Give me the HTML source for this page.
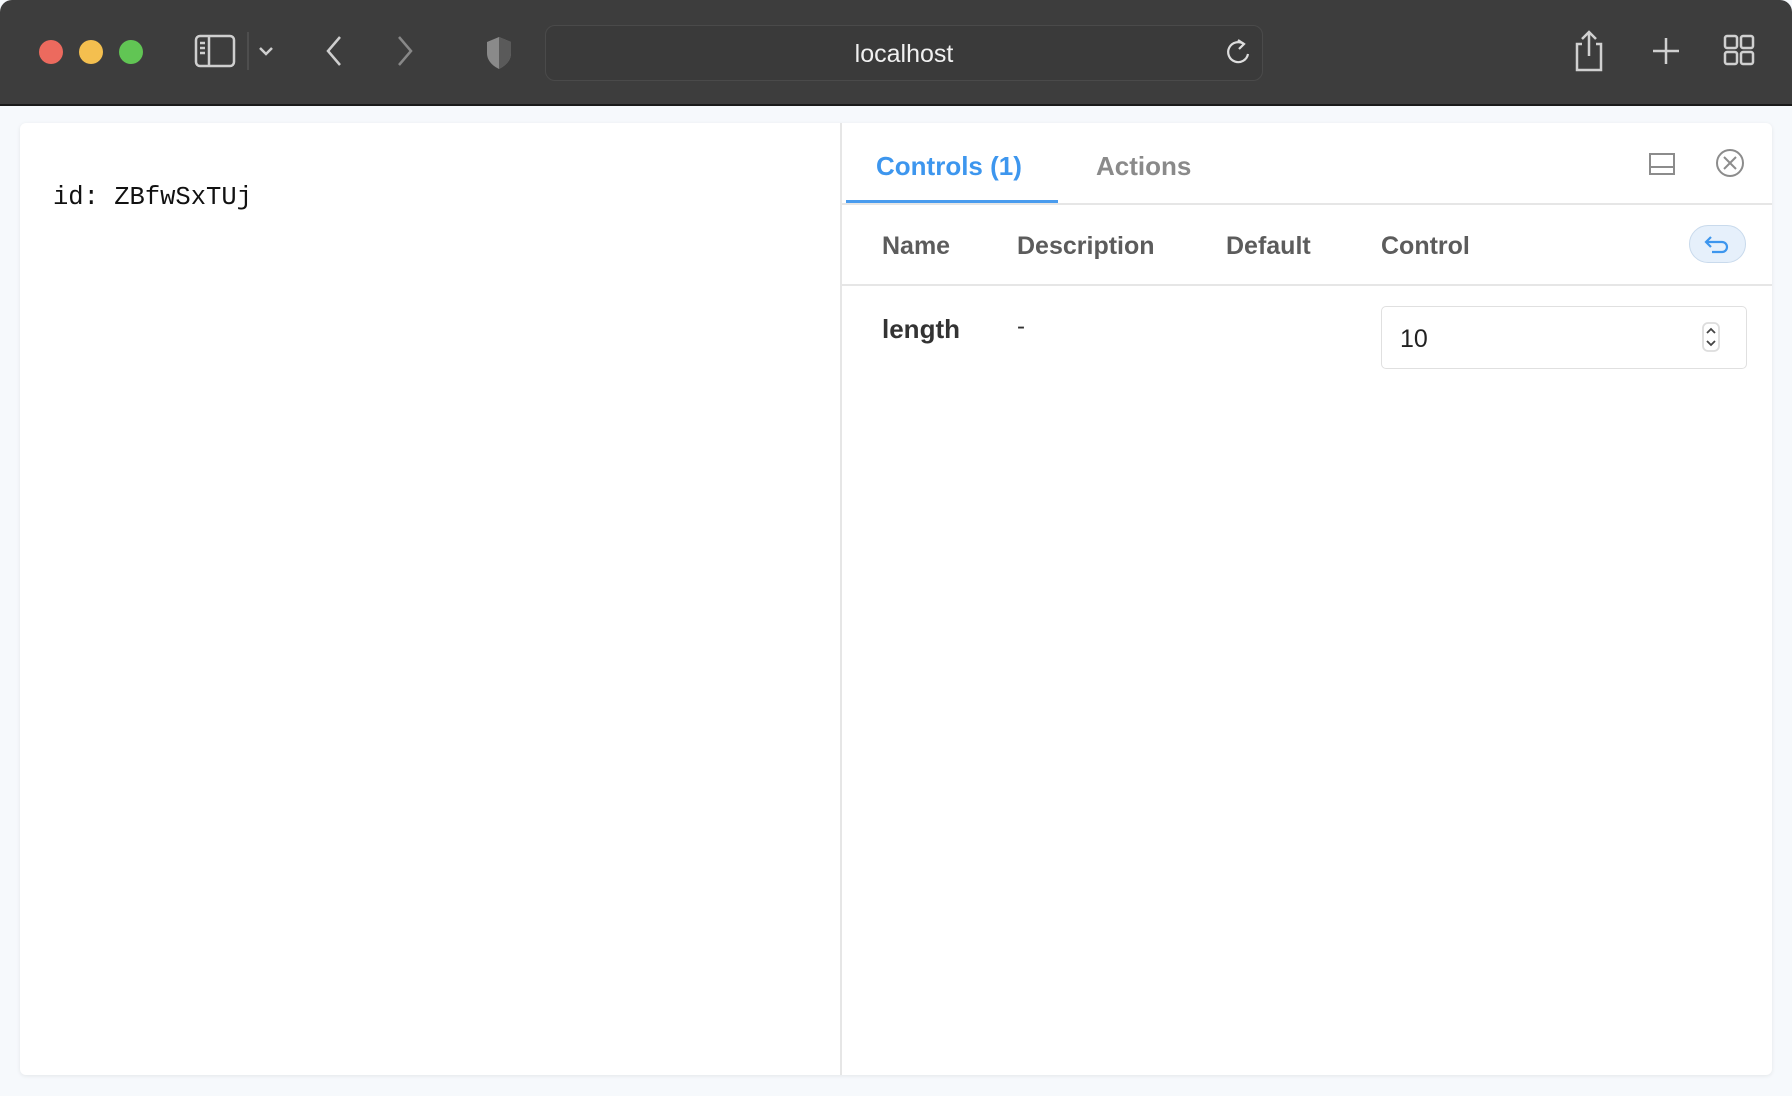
<!DOCTYPE html>
<html><head><meta charset="utf-8"><style>
*{box-sizing:border-box;margin:0;padding:0}
body{width:1792px;height:1096px;background:#f6f9fc;font-family:"Liberation Sans",sans-serif;position:relative;overflow:hidden}
.bar{position:absolute;left:0;top:0;width:1792px;height:106px;background:#3d3d3d;border-bottom:2px solid #1a1a1a;border-radius:12px 12px 0 0}
.dot{position:absolute;top:40px;width:24px;height:24px;border-radius:50%}
.url{position:absolute;left:545px;top:25px;width:718px;height:56px;border:1px solid #4a4a4a;border-radius:10px;background:#3a3a3a;color:#f0f0f0;font-size:25px;text-align:center;line-height:56px}
.card{position:absolute;left:20px;top:123px;width:1752px;height:952px;background:#fff;border-radius:6px;box-shadow:0 1px 4px rgba(0,0,0,.08)}
.div{position:absolute;left:820px;top:0;width:2px;height:952px;background:#e6e6e6}
.mono{position:absolute;left:33px;top:60px;font-family:"Liberation Mono",monospace;font-size:25.5px;color:#111}
.t{position:absolute;font-weight:bold;font-size:26px}
.h{position:absolute;font-weight:bold;font-size:25px;color:#5c5c5c;top:109px}
</style></head><body>
<div class="bar">
<div class="dot" style="left:39px;background:#ec6a5e"></div>
<div class="dot" style="left:79px;background:#f4bf4f"></div>
<div class="dot" style="left:119px;background:#61c554"></div>
<svg style="position:absolute;left:190px;top:30px" width="300" height="44" fill="none" stroke="#cfcfcf" stroke-width="2.5">
<rect x="6" y="6" width="38" height="30" rx="4"/><line x1="19" y1="6" x2="19" y2="36"/>
<line x1="10" y1="13" x2="15" y2="13"/><line x1="10" y1="18" x2="15" y2="18"/><line x1="10" y1="23" x2="15" y2="23"/>
<line x1="58" y1="2" x2="58" y2="40" stroke="#555" stroke-width="1.5"/>
<path d="M70 18l6 6 6-6"/>
<path d="M150 7l-12 14 12 14"/>
<path d="M209 7l12 14-12 14" stroke="#888"/>
</svg>
<svg style="position:absolute;left:484px;top:35px" width="30" height="36"><path d="M15 2 L27 7 V18 C27 26 21 31 15 34 C9 31 3 26 3 18 V7Z" fill="#8a8a8a"/><path d="M15 2 L27 7 V18 C27 26 21 31 15 34Z" fill="#5a5a5a"/></svg>
<div class="url">localhost</div>
<svg style="position:absolute;left:1224px;top:38px" width="28" height="30" fill="none" stroke="#ddd" stroke-width="2.2"><path d="M20 6 A10 10 0 1 0 24 16"/><path d="M14 2l6 4-5 5"/></svg>
<svg style="position:absolute;left:1570px;top:28px" width="200" height="46" fill="none" stroke="#d0d0d0" stroke-width="2.5">
<path d="M12 16H7V42H31V16H26"/><path d="M19 4V28M12 11l7-7 7 7"/>
<path d="M96 10V36M83 23H109"/>
<rect x="155" y="8" width="12" height="12" rx="2"/><rect x="171" y="8" width="12" height="12" rx="2"/><rect x="155" y="24" width="12" height="12" rx="2"/><rect x="171" y="24" width="12" height="12" rx="2"/>
</svg>
</div>
<div class="card">
<div class="mono">id: ZBfwSxTUj</div>
<div class="div"></div>
<div class="t" style="left:856px;top:28px;color:#3d96ee">Controls (1)</div>
<div class="t" style="left:1076px;top:28px;color:#8a8a8a">Actions</div>
<div style="position:absolute;left:826px;top:77px;width:212px;height:4px;background:#4a9cee"></div>
<div style="position:absolute;left:822px;top:80px;width:930px;height:2px;background:#e6e6e6"></div>
<svg style="position:absolute;left:1608px;top:24px" width="120" height="36" fill="none" stroke="#8c8c8c" stroke-width="2">
<rect x="22" y="7" width="24" height="20"/><line x1="22" y1="20" x2="46" y2="20"/>
<circle cx="102" cy="16" r="13"/><path d="M96 10l12 12M108 10l-12 12"/>
</svg>
<div class="h" style="left:862px">Name</div>
<div class="h" style="left:997px">Description</div>
<div class="h" style="left:1206px">Default</div>
<div class="h" style="left:1361px">Control</div>
<div style="position:absolute;left:1669px;top:102px;width:57px;height:38px;border-radius:19px;background:#e6f0fb;border:1px solid #c9daec"></div>
<svg style="position:absolute;left:1683px;top:108px" width="30" height="26" fill="none" stroke="#3d96ee" stroke-width="2.2"><path d="M8 6l-5 5 5 5"/><path d="M3 11H19a5 5 0 0 1 0 10H9"/></svg>
<div style="position:absolute;left:822px;top:161px;width:930px;height:2px;background:#e6e6e6"></div>
<div style="position:absolute;left:862px;top:191px;font-weight:bold;font-size:26px;color:#333">length</div>
<div style="position:absolute;left:997px;top:190px;font-size:24px;color:#333">-</div>
<div style="position:absolute;left:1361px;top:183px;width:366px;height:63px;border:1.5px solid #e0e0e0;border-radius:5px;background:#fff"></div>
<div style="position:absolute;left:1380px;top:202px;font-size:25px;color:#222">10</div>
<svg style="position:absolute;left:1681px;top:199px" width="20" height="30" fill="none" stroke="#444" stroke-width="1.8"><rect x="2" y="1" width="16" height="28" rx="5" stroke="#ddd"/><path d="M6 11l4-4 4 4M6 19l4 4 4-4"/></svg>
</div>
</body></html>
